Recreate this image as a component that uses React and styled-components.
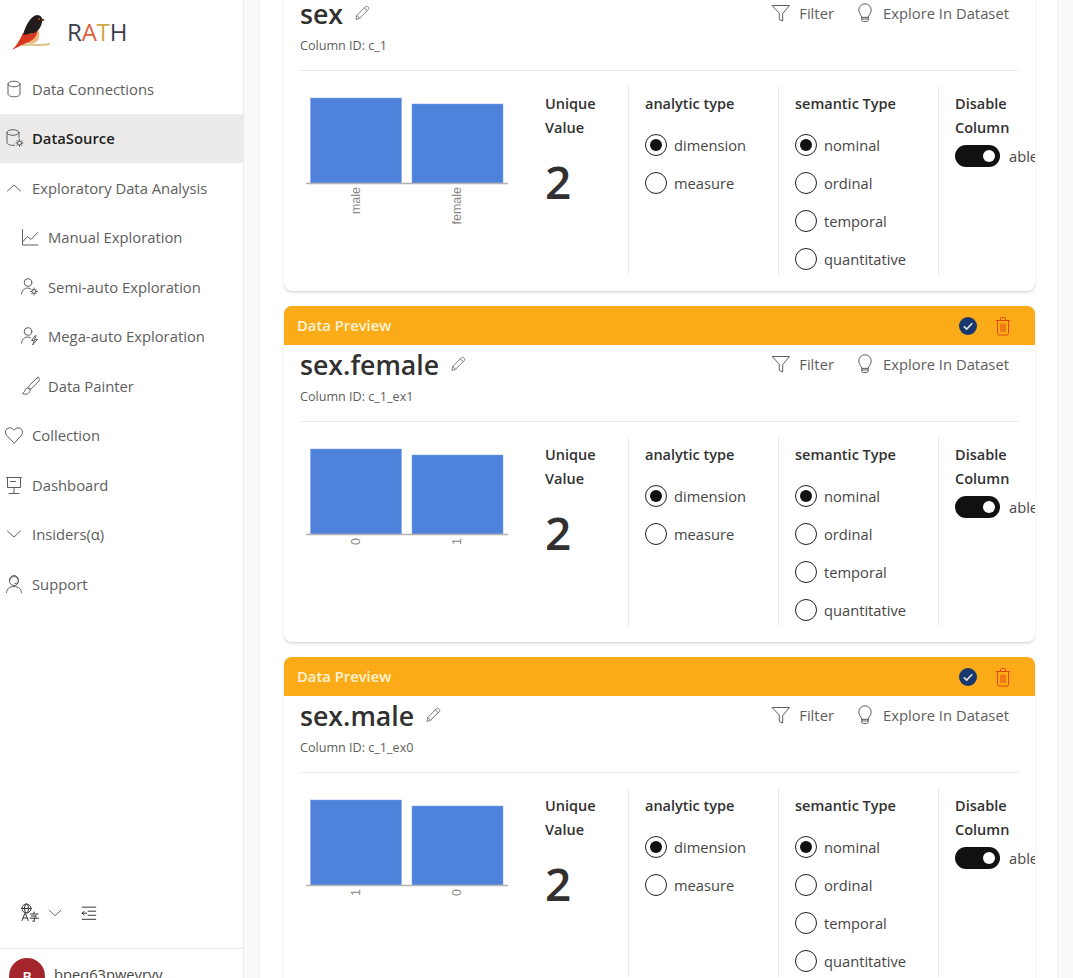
import React from "react";
import styled, { createGlobalStyle } from "styled-components";

const GlobalStyle = createGlobalStyle`
  html, body {
    margin: 0;
    padding: 0;
    height: 978px;
    overflow: hidden;
    background: #fff;
  }
  body {
    font-family: "Open Sans", "Noto Sans", sans-serif;
    color: #323130;
  }
  * { box-sizing: border-box; }
`;

const line = { fill: "none", stroke: "currentColor", strokeWidth: 1, strokeLinecap: "round", strokeLinejoin: "round" };

const icons = {
  database: (
    <g {...line}>
      <ellipse cx="10" cy="5" rx="6" ry="2.8" />
      <path d="M4 5v10c0 1.6 2.7 2.8 6 2.8s6-1.2 6-2.8V5" />
    </g>
  ),
  databaseGear: (
    <g {...line}>
      <ellipse cx="9" cy="4.500" rx="6" ry="2.8" />
      <path d="M3 4.500v10c0 1.600 2.500 2.800 6 2.800h1.500M15 4.500v5.500" />
      <circle cx="15.500" cy="15" r="2" />
      <path d="M15.500 11.500v1.500M15.500 17v1.500M12 15h1.500M17.500 15H19M13 12.500l1 1M17 16.500l1 1M18 12.500l-1 1M14 16.500l-1 1" />
    </g>
  ),
  chevronUp: <path {...line} d="M3.500 13 10 7l6.500 6" />,
  chevronDown: <path {...line} d="M3.500 7 10 13l6.500-6" />,
  chart: <path {...line} d="M2.500 2.500v15.500h15.500M3 14.500l4.500-5 3.500 3 6.500-7" />,
  personGear: (
    <g {...line}>
      <circle cx="8" cy="5.500" r="3.800" />
      <path d="M1.500 17c.5-3.600 2.800-6 6-6 1 0 2 .3 2.800.8" />
      <circle cx="14" cy="14.500" r="2" />
      <path d="M14 11v1.200M14 16.800V18M10.500 14.500h1.200M16.300 14.500h1.200M11.700 12.200l.8.8M15.500 16l.8.8M16.300 12.200l-.8.8M12.500 16l-.8.8" />
    </g>
  ),
  personBolt: (
    <g {...line}>
      <circle cx="8" cy="5.500" r="3.800" />
      <path d="M1.500 17c.5-3.600 2.800-6 6-6 1 0 2 .3 2.800.8" />
      <path d="M15 10l-3.500 4.500h3L12.500 19l5-5.500h-3l1.500-3.500z" />
    </g>
  ),
  brush: (
    <g {...line}>
      <path d="M18 1.500c-3.500 2.500-7.500 6.500-10 10l2 2c3.500-2.500 7.500-6.500 10-10-.5-1-1-1.500-2-2z" />
      <path d="M7.500 12c-2.500 0-2.500 2.500-3 3.500-.4.800-1.500 1.500-2 2 2 1.200 4.500 1 6-.2 1.400-1.100 1.500-2.500 1.500-3.800z" />
    </g>
  ),
  heart: <path {...line} d="M10 18 2.800 10.500C1 8.600 1 5.800 2.700 4.100c1.800-1.800 4.800-1.700 6.500.2l.8.900.8-.9c1.700-1.900 4.700-2 6.500-.2 1.700 1.700 1.700 4.500-.1 6.400z" />,
  board: <path {...line} d="M2.500 2.500h15M3.500 2.500v10h13v-10M10 12.500v6M5 18.500h10M6.500 6.500h5" />,
  headset: (
    <g {...line}>
      <circle cx="10" cy="7" r="4.500" />
      <path d="M2.500 18.500c.5-3.800 3-6 7.500-6s7 2.200 7.500 6M5.500 7c0-3.500 2-5.500 4.500-5.500S14.500 3.500 14.500 7c0 1.500-1.500 2.500-3.500 2.500" />
    </g>
  ),
  translate: (
    <g {...line}>
      <circle cx="6.500" cy="5.500" r="4.500" />
      <ellipse cx="6.500" cy="5.500" rx="2" ry="4.500" />
      <path d="M2 5.500h9" />
      <path d="M2 17.500 4.800 10.500h.6L8.200 17.500M3 15h4.200M10.500 11h7.500M14 9v1.500M11.500 13h5l-2.200 2v3.500l-1.500-.5M10 15.200h8.500" />
    </g>
  ),
  outdent: <path {...line} d="M2.500 3.500h15M9 8h8.500M9 12.500h8.500M2.500 17h15M2.500 10.200h5M2.500 10.200l2-2M2.500 10.200l2 2" />,
  pencil: (
    <g {...line}>
      <path d="M2.500 17.500l1-4.500L14.500 2a1.800 1.800 0 0 1 2.500 0l1 1a1.800 1.800 0 0 1 0 2.500L7 16.500z" />
      <path d="M13 3.500l3.500 3.500M3.500 13 7 16.500" />
    </g>
  ),
  filter: <path {...line} d="M1.500 2.500h17l-6.800 8v7.500l-3.400-1.500v-6z" />,
  bulb: (
    <g {...line}>
      <path d="M6.800 14c-.3-1.800-3-3.500-3-7a6.200 6.200 0 0 1 12.400 0c0 3.500-2.700 5.200-3 7z" />
      <path d="M6.800 14v3c0 1 .8 1.500 1.500 1.500h3.400c.7 0 1.500-.5 1.500-1.500v-3M7 16h6" />
    </g>
  ),
};

const Icon = ({ name, size = 20, color = "#605e5c" }) => (
  <svg width={size} height={size} viewBox="0 0 20 20" style={{ color, flex: "none" }}>
    {icons[name]}
  </svg>
);

const Page = styled.div`
  display: flex;
  height: 978px;
  overflow: hidden;
`;

const Sidebar = styled.aside`
  flex: none;
  width: 244px;
  height: 978px;
  display: flex;
  flex-direction: column;
  border-right: 1px solid #edebe9;
  overflow: hidden;
`;

const Brand = styled.div`
  display: flex;
  align-items: center;
  height: 64px;
  padding-left: 10px;
  padding-bottom: 1px;
`;

const BrandName = styled.span`
  margin-left: 15px;
  font-size: 24px;
  letter-spacing: -0.2px;
  color: #3c3c4a;
`;

const BrandLetter = styled.span`
  color: ${(p) => p.$color};
`;

const Nav = styled.nav`
  flex: 1;
`;

const NavItem = styled.div`
  display: flex;
  align-items: center;
  height: 49.5px;
  padding-left: ${(p) => (p.$sub ? 20 : 4)}px;
  gap: 8px;
  font-size: 14.800px;
  color: ${(p) => (p.$active ? "#201f1e" : "#605e5c")};
  font-weight: ${(p) => (p.$active ? 600 : 400)};
  background: ${(p) => (p.$active ? "#edebe9" : "transparent")};
`;

const Tools = styled.div`
  display: flex;
  align-items: center;
  height: 70px;
  padding-left: 20px;
`;

const Chevron = styled.span`
  display: flex;
  margin-left: 6px;
  margin-right: 16px;
`;

const UserRow = styled.div`
  flex: none;
  height: 30px;
  display: flex;
  align-items: flex-start;
  gap: 9px;
  padding: 9px 0 0 9px;
  border-top: 1px solid #e6e6e6;
`;

const Avatar = styled.div`
  width: 36px;
  height: 36px;
  border-radius: 50%;
  background: #a4262c;
  color: #fff;
  font-size: 14px;
  font-weight: 600;
  display: flex;
  align-items: center;
  justify-content: center;
  flex: none;
`;

const UserName = styled.span`
  font-size: 14.700px;
  color: #484644;
  line-height: 33px;
`;

const Main = styled.main`
  flex: 1;
  min-width: 0;
  height: 978px;
  padding: 0 15px;
  background: #faf9f8;
`;

const Panel = styled.section`
  height: 978px;
  padding: 0 22px 0 24px;
  background: #fff;
  border-left: 1px solid #f3f2f1;
  border-right: 1px solid #f3f2f1;
  overflow: hidden;
`;

/* page is scrolled, first card starts above the fold */
const CardList = styled.div`
  display: flex;
  flex-direction: column;
  gap: 15px;
  margin-top: -45px;
`;

const Card = styled.article`
  height: 336px;
  background: #fff;
  border-radius: 8px;
  box-shadow: 0 1.600px 3.600px rgba(0, 0, 0, 0.1), 0 0.300px 0.900px rgba(0, 0, 0, 0.07);
  overflow: hidden;
  flex: none;
`;

const PreviewBar = styled.header`
  height: 39px;
  display: flex;
  align-items: center;
  justify-content: space-between;
  padding: 0 22px 0 13px;
  background: #fbab18;
  color: #fff3d6;
  font-size: 14.800px;
  font-weight: 600;
`;

const PreviewTitle = styled.span`
  margin-top: -2px;
`;

const BarActions = styled.div`
  display: flex;
  align-items: center;
  gap: 15px;
`;

const CardInner = styled.div`
  padding-left: 16px;
`;

const TitleRow = styled.div`
  display: flex;
  justify-content: space-between;
  height: 76px;
  padding-right: 26px;
`;

const TitleLine = styled.div`
  display: flex;
  align-items: center;
  gap: 11px;
  height: 40px;
`;

const Title = styled.h2`
  margin: 0;
  font-size: 26.700px;
  font-weight: 600;
  line-height: 40px;
  color: #323130;
`;

const PencilWrap = styled.span`
  display: flex;
  margin-top: -3px;
`;

const ColumnId = styled.div`
  margin-top: 4px;
  font-size: 12.600px;
  line-height: 16px;
  color: #605e5c;
`;

const Commands = styled.div`
  display: flex;
  align-items: center;
  gap: 21px;
  height: 40px;
  margin-top: -1px;
`;

const Command = styled.span`
  display: flex;
  align-items: center;
  gap: 8px;
  font-size: 14.800px;
  color: #605e5c;
`;

const Divider = styled.hr`
  margin: 0 16px 15px 0;
  border: 0;
  border-top: 1px solid #edebe9;
`;

const Stats = styled.div`
  display: flex;
  height: 189px;
  overflow: hidden;
`;

const ChartBox = styled.div`
  flex: none;
  width: 245px;
`;

const StatCol = styled.div`
  flex: none;
  width: ${(p) => p.$width}px;
  padding-left: ${(p) => (p.$plain ? 0 : 16)}px;
  border-right: ${(p) => (p.$last ? 0 : "1px solid #edebe9")};
  overflow: hidden;
`;

const Label = styled.div`
  font-size: 14.500px;
  font-weight: 600;
  line-height: 23.500px;
  padding-top: 6px;
  color: #323130;
`;

const BigNumber = styled.div`
  margin-top: 10px;
  font-size: 46px;
  font-weight: 600;
  line-height: 64px;
  color: #323130;
`;

const RadioGroup = styled.div`
  display: flex;
  flex-direction: column;
  gap: 16px;
  margin-top: 18px;
`;

const RadioRow = styled.div`
  display: flex;
  align-items: center;
  gap: 7px;
  height: 22px;
  font-size: 14.700px;
  color: #484644;
`;

const RadioMark = styled.span`
  position: relative;
  flex: none;
  width: 22px;
  height: 22px;
  border-radius: 50%;
  border: 1px solid #201f1e;
  ${(p) =>
    p.$on &&
    `&::after {
      content: "";
      position: absolute;
      left: 4px;
      top: 4px;
      width: 12px;
      height: 12px;
      border-radius: 50%;
      background: #111;
    }`}
`;

const SwitchRow = styled.div`
  display: flex;
  align-items: center;
  gap: 9px;
  height: 24px;
  margin-top: 5px;
  font-size: 14.700px;
  color: #484644;
  white-space: nowrap;
`;

const SwitchTrack = styled.span`
  position: relative;
  flex: none;
  width: 45px;
  height: 22px;
  border-radius: 11px;
  background: #111;
  &::after {
    content: "";
    position: absolute;
    right: 5px;
    top: 5px;
    width: 12px;
    height: 12px;
    border-radius: 50%;
    background: #fff;
  }
`;

const BarChart = ({ labels }) => (
  <svg width="245" height="150" viewBox="0 0 245 150">
    <rect x="10.500" y="12" width="91" height="85" fill="#4f82da" stroke="#7ea2e2" strokeWidth="0.5" />
    <rect x="112" y="18" width="91" height="79" fill="#4f82da" stroke="#7ea2e2" strokeWidth="0.5" />
    <line x1="6" x2="208" y1="97.500" y2="97.500" stroke="#b4b4b8" strokeWidth="1.500" />
    {labels.map((text, i) => (
      <text
        key={text}
        transform={`translate(${i === 0 ? 60 : 161} 101) rotate(-90)`}
        textAnchor="end"
        fontSize="12.500"
        fontFamily="'Liberation Sans', sans-serif"
        fill="#8a8886"
      >
        {text}
      </text>
    ))}
  </svg>
);

const CheckBadge = () => (
  <svg width="20" height="20" viewBox="0 0 20 20">
    <circle cx="10" cy="10" r="9" fill="#17376e" />
    <path d="M5.800 10.300 8.700 13l5.500-5.800" fill="none" stroke="#e8e4d8" strokeWidth="1.600" />
  </svg>
);

const TrashIcon = () => (
  <svg width="20" height="20" viewBox="0 0 20 20" fill="none" stroke="#e04a10" strokeWidth="1">
    <path d="M3 4.500h14M7.500 4.500v-2a1 1 0 0 1 1-1h3a1 1 0 0 1 1 1v2M4.500 4.500v13a1.500 1.500 0 0 0 1.500 1.500h8a1.500 1.500 0 0 0 1.500-1.500v-13M8 7.500v8.500M10 7.500v8.500M12 7.500v8.500" />
  </svg>
);

const BirdLogo = () => (
  <svg width="42" height="42" viewBox="0 0 42 42">
    <path d="M12 34C20 33 30 35 40 33" stroke="#d8c48a" strokeWidth="2" fill="none" />
    <path d="M13 22C18 24 23 23 28 19C28 26 22 31 14 33L2 39C6 35 10 29 13 22Z" fill="#d9381e" />
    <path d="M17 32C23 30 27 25 28 19C30 23 30 28 26 31C23 33 20 33 17 32Z" fill="#f0b878" />
    <path d="M27 4C31 4 33 7 32 11C31 17 28 20 24 22L13 24C15 16 20 5 27 4Z" fill="#231c1c" />
    <path d="M31 7L35 9L31.500 10.500Z" fill="#5a3020" />
    <circle cx="29" cy="8" r="1" fill="#c9452a" />
  </svg>
);

const analytic = ["dimension", "measure"];
const semantic = ["nominal", "ordinal", "temporal", "quantitative"];

const fields = [
  { name: "sex", id: "c_1", labels: ["male", "female"] },
  { name: "sex.female", id: "c_1_ex1", labels: ["0", "1"] },
  { name: "sex.male", id: "c_1_ex0", labels: ["1", "0"] },
];

const nav = [
  { label: "Data Connections", icon: "database" },
  { label: "DataSource", icon: "databaseGear", active: true },
  { label: "Exploratory Data Analysis", icon: "chevronUp" },
  { label: "Manual Exploration", icon: "chart", sub: true },
  { label: "Semi-auto Exploration", icon: "personGear", sub: true },
  { label: "Mega-auto Exploration", icon: "personBolt", sub: true },
  { label: "Data Painter", icon: "brush", sub: true },
  { label: "Collection", icon: "heart" },
  { label: "Dashboard", icon: "board" },
  { label: "Insiders(α)", icon: "chevronDown" },
  { label: "Support", icon: "headset" },
];

const RadioList = ({ options }) => (
  <RadioGroup>
    {options.map((o, i) => (
      <RadioRow key={o}>
        <RadioMark $on={i === 0} />
        {o}
      </RadioRow>
    ))}
  </RadioGroup>
);

const FieldCard = ({ field }) => (
  <Card>
    <PreviewBar>
      <PreviewTitle>Data Preview</PreviewTitle>
      <BarActions>
        <CheckBadge />
        <TrashIcon />
      </BarActions>
    </PreviewBar>
    <CardInner>
      <TitleRow>
        <div>
          <TitleLine>
            <Title>{field.name}</Title>
            <PencilWrap>
              <Icon name="pencil" size={16} />
            </PencilWrap>
          </TitleLine>
          <ColumnId>Column ID: {field.id}</ColumnId>
        </div>
        <Commands>
          <Command>
            <Icon name="filter" />
            Filter
          </Command>
          <Command>
            <Icon name="bulb" />
            Explore In Dataset
          </Command>
        </Commands>
      </TitleRow>
      <Divider />
      <Stats>
        <ChartBox>
          <BarChart labels={field.labels} />
        </ChartBox>
        <StatCol $width={84} $plain>
          <Label>Unique Value</Label>
          <BigNumber>2</BigNumber>
        </StatCol>
        <StatCol $width={150}>
          <Label>analytic type</Label>
          <RadioList options={analytic} />
        </StatCol>
        <StatCol $width={160}>
          <Label>semantic Type</Label>
          <RadioList options={semantic} />
        </StatCol>
        <StatCol $width={96} $last>
          <Label>Disable Column</Label>
          <SwitchRow>
            <SwitchTrack />
            abled
          </SwitchRow>
        </StatCol>
      </Stats>
    </CardInner>
  </Card>
);

export default function App() {
  return (
    <Page>
      <GlobalStyle />
      <Sidebar>
        <Brand>
          <BirdLogo />
          <BrandName>
            R<BrandLetter $color="#d9613c">A</BrandLetter>
            <BrandLetter $color="#d2a648">T</BrandLetter>H
          </BrandName>
        </Brand>
        <Nav>
          {nav.map((item) => (
            <NavItem key={item.label} $sub={item.sub} $active={item.active}>
              <Icon name={item.icon} />
              {item.label}
            </NavItem>
          ))}
        </Nav>
        <Tools>
          <Icon name="translate" color="#323130" />
          <Chevron>
            <Icon name="chevronDown" size={18} />
          </Chevron>
          <Icon name="outdent" size={18} color="#201f1e" />
        </Tools>
        <UserRow>
          <Avatar>B</Avatar>
          <UserName>bpeq63pweyryy</UserName>
        </UserRow>
      </Sidebar>
      <Main>
        <Panel>
          <CardList>
            {fields.map((f) => (
              <FieldCard key={f.id} field={f} />
            ))}
          </CardList>
        </Panel>
      </Main>
    </Page>
  );
}
